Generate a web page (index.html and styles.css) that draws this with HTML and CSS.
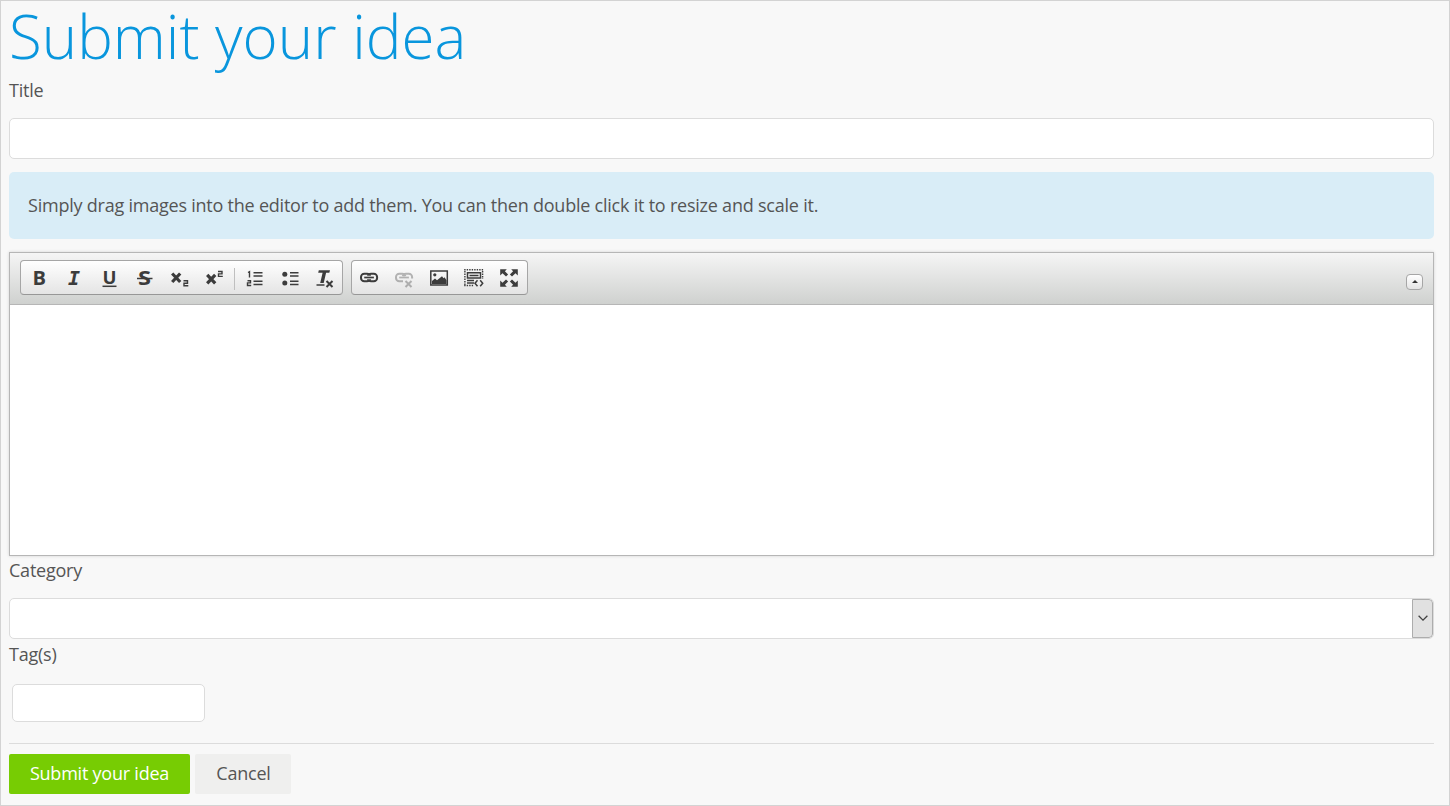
FILE: index.html
```html
<!DOCTYPE html>
<html lang="en">
<head>
<meta charset="utf-8">
<title>Submit your idea</title>
<link rel="stylesheet" href="styles.css">
</head>
<body>
<main class="page">
  <h1 class="heading">Submit your idea</h1>
  <form class="form">
    <label class="label" for="title">Title</label>
    <input class="field" id="title" type="text">
    <div class="notice">Simply drag images into the editor to add them. You can then double click it to resize and scale it.</div>

    <section class="editor">
      <div class="toolbar">
        <div class="group">
          <span class="tool"><svg class="icon" viewBox="0 0 21 21"><text class="glyph" x="4.500" y="18" textLength="13.5" lengthAdjust="spacingAndGlyphs">B</text></svg></span>
          <span class="tool"><svg class="icon" viewBox="0 0 21 21"><text class="glyph mono" x="5" y="18">I</text></svg></span>
          <span class="tool"><svg class="icon" viewBox="0 0 21 21"><text class="glyph underlined" x="4.500" y="16.500" textLength="14" lengthAdjust="spacingAndGlyphs">U</text><path class="line" d="M4.500 19.300h14"/></svg></span>
          <span class="tool"><svg class="icon" viewBox="0 0 21 21"><text class="glyph" x="5" y="18" textLength="13" lengthAdjust="spacingAndGlyphs">S</text><path class="line" d="M4 11.500h15.500"/></svg></span>
          <span class="tool"><svg class="icon" viewBox="0 0 21 21"><path class="cross" d="M4.200 6.500l8 8.500M12.200 6.500l-8 8.500"/><path class="digit" d="M15.500 13.800h4v2.400h-3.500v2.500h4.300"/></svg></span>
          <span class="tool"><svg class="icon" viewBox="0 0 21 21"><path class="cross" d="M4.200 7.800l8 8.500M12.200 7.800l-8 8.500"/><path class="digit" d="M15 4.500h4v2.400h-3.500v2.500h4.300"/></svg></span>
          <span class="separator"></span>
          <span class="tool"><svg class="icon" viewBox="0 0 21 21"><path class="digit" d="M4 5.500l1.500-.8v5.800M3.500 13.700h3v2.200h-3v2.600h3.700"/><path class="line" d="M9.500 5.800h9M9.500 9h9M9.500 14.200h9M9.500 17.500h9"/></svg></span>
          <span class="tool"><svg class="icon" viewBox="0 0 21 21"><circle class="solid" cx="5.800" cy="7.300" r="2.500"/><circle class="solid" cx="5.800" cy="16" r="2.500"/><path class="line" d="M11 5.800h8.500M11 9h8.500M11 14.200h8.500M11 17.500h8.500"/></svg></span>
          <span class="tool"><svg class="icon" viewBox="0 0 21 21"><path class="solid" d="M4.800 3.200h11.200l-.7 2.600h-3.200l-2.400 10.200h-3.500l2.400-10.200h-4.400z"/><path class="line" d="M2.500 18h8"/><path class="cross small" d="M12.500 14l6 6M18.500 14l-6 6"/></svg></span>
        </div>
        <div class="group">
          <span class="tool"><svg class="icon" viewBox="0 0 21 21"><g class="chain"><rect x="2" y="6.700" width="9.300" height="7.600" rx="3.300"/><rect x="8.800" y="6.700" width="9.300" height="7.600" rx="3.300"/><path class="chain-gap" d="M5.200 10.500h9.700"/><path class="chain-bar" d="M5.200 10.500h9.700"/></g></svg></span>
          <span class="tool"><svg class="icon faded" viewBox="0 0 21 21"><g class="chain"><path d="M9 14.300h-3.700a3.300 3.300 0 0 1-3.300-3.300v-1a3.300 3.300 0 0 1 3.300-3.300h2.700a3.300 3.300 0 0 1 3.300 2.500M8.800 9.300a3.300 3.300 0 0 1 3.300-2.600h2.700a3.300 3.300 0 0 1 3.300 3.300v1.500"/><path class="chain-bar" d="M5.200 10.500h9.700"/></g><path class="cross small" d="M11.500 14l6 6M17.500 14l-6 6"/></svg></span>
          <span class="tool"><svg class="icon" viewBox="0 0 21 21"><rect class="line" x="1.800" y="4" width="16.500" height="14"/><circle class="solid" cx="5.800" cy="7.800" r="1.600"/><path class="solid" d="M3 17v-3l3-2.500 2 1.700 5-4 1.500 2 1-1 2 3v3.800z"/></svg></span>
          <span class="tool"><svg class="icon" viewBox="0 0 21 21"><path class="dots" d="M.2 2.700h19M.2 18.500h10M.9 4v14M18.600 4v8"/><path class="line" d="M3.500 5.700h13v5.300h-13zM3 13.500h7M3 16h7M5.500 8.400h9"/><path class="line" d="M13.500 13.200l-2.500 3 2.500 3M16.200 13.200l2.500 3-2.500 3"/></svg></span>
          <span class="tool"><svg class="icon" viewBox="0 0 21 21"><path class="solid" d="M1.200 2.300h6.600l-1.900 2 3.200 3.200-2.100 2.100-3.500-3.400-2.300 2.200zM18.800 2.300h-6.600l1.900 2-3.200 3.200 2.100 2.100 3.500-3.400 2.300 2.200zM1.200 19.700h6.600l-1.900-2 3.200-3.200-2.100-2.100-3.500 3.400-2.300-2.200zM18.800 19.700h-6.600l1.900-2-3.200-3.200 2.100-2.100 3.500 3.400 2.300-2.200z"/></svg></span>
        </div>
        <span class="collapse"><svg class="collapse-arrow" viewBox="0 0 6 3"><path d="M0 3l3-3 3 3z"/></svg></span>
      </div>
      <div class="canvas"></div>
    </section>

    <label class="label category-label">Category</label>
    <div class="field select"><span class="select-button"><svg class="chevron" viewBox="0 0 10 6"><path d="M.6.700l4.400 4.400 4.400-4.400"/></svg></span></div>
    <label class="label tag-label" for="tags">Tag(s)</label>
    <input class="field tags" id="tags" type="text">
    <div class="actions">
      <button class="button primary" type="button">Submit your idea</button>
      <button class="button" type="button">Cancel</button>
    </div>
  </form>
</main>
</body>
</html>
```
FILE: styles.css
```css
* { box-sizing: border-box; }

body {
  margin: 0;
  background: #f8f8f8;
  color: #555;
  font: 18px/26px "Open Sans", sans-serif;
  letter-spacing: -0.225px;
}

.page {
  height: 806px;
  padding: 0 15px 0 8px;
  border: 1px solid #d3d3d3;
}

.heading {
  height: 76px;
  margin: 0;
  color: #0996dd;
  font-size: 60px;
  font-weight: 300;
  line-height: 71px;
  letter-spacing: 0;
}

.form { display: flex; flex-direction: column; }

.label { height: 41px; }

.field {
  width: 100%;
  height: 41px;
  padding: 0 12px;
  border: 1px solid #dcdcdc;
  border-radius: 5px;
  background: #fff;
  font: inherit;
}

.notice {
  height: 67px;
  margin: 13px 0;
  padding: 0 19px;
  border-radius: 5px;
  background: #d9edf7;
  line-height: 67px;
}

.editor {
  height: 304px;
  border: 1px solid #b6b6b6;
  background: #fff;
  box-shadow: 0 0 3px rgba(0, 0, 0, .15);
}

.toolbar {
  display: flex;
  align-items: flex-start;
  gap: 8px;
  height: 52px;
  padding: 7px 10px;
  border-bottom: 1px solid #b6b6b6;
  background: linear-gradient(#f5f5f5, #cfd1cf);
}

.group {
  display: flex;
  height: 35px;
  border: 1px solid #a6a6a6;
  border-bottom-color: #979797;
  border-radius: 4px;
  background: linear-gradient(#fff, #e4e4e4);
}

.tool {
  display: flex;
  align-items: center;
  justify-content: center;
  width: 35px;
}

.icon {
  width: 21px;
  height: 21px;
  overflow: visible;
  fill: none;
  color: #3c3c3c;
}

.faded { opacity: .35; }
.glyph { fill: currentColor; font: bold 20px "Open Sans", sans-serif; letter-spacing: 0; }
.underlined { font-size: 18.500px; }
.mono { font: italic bold 20px "DejaVu Sans Mono", monospace; }
.solid { fill: currentColor; }
.line { stroke: currentColor; stroke-width: 1.5; }
.cross { stroke: currentColor; stroke-width: 3.200; }
.small { stroke-width: 2; }
.digit { stroke: currentColor; stroke-width: 1.400; }
.chain { stroke: currentColor; stroke-width: 2; }
.chain-gap { stroke: #f2f2f2; stroke-width: 3.600; }
.chain-bar { stroke-width: 1.700; }
.dots { stroke: currentColor; stroke-width: 1.400; stroke-dasharray: 1.400 1.100; }

.separator {
  width: 1px;
  height: 22px;
  margin: 7px 2px 0 3px;
  background: #bfbfbf;
}

.collapse {
  display: flex;
  align-items: center;
  justify-content: center;
  width: 17px;
  height: 16px;
  margin: 14px 0 0 auto;
  border: 1px solid #a6a6a6;
  border-radius: 4px;
  background: linear-gradient(#fff, #e4e4e4);
}

.collapse-arrow { width: 6px; height: 3px; margin-top: -2px; fill: #333; }

.category-label { height: 42px; padding-top: 1px; }

.select {
  display: flex;
  justify-content: flex-end;
  padding: 0;
  overflow: hidden;
}

.select-button {
  display: flex;
  align-items: center;
  justify-content: center;
  width: 21px;
  border: 1px solid #adadad;
  border-radius: 0 4px 4px 0;
  background: #e1e1e1;
}

.chevron { width: 10px; height: 6px; margin-bottom: 1px; fill: none; stroke: #444; stroke-width: 1.300; }

.tag-label { height: 45px; padding-top: 2px; }

.tags { width: 193px; height: 38px; margin-left: 3px; }

.actions {
  display: flex;
  gap: 5px;
  margin-top: 21px;
  padding-top: 10px;
  border-top: 1px solid #dcdcdc;
}

.button {
  width: 96px;
  height: 40px;
  padding: 0 0 2px 1px;
  border: 0;
  border-radius: 2px;
  background: #efefee;
  color: #555;
  font: inherit;
  letter-spacing: inherit;
}

.primary { width: 181px; padding-left: 0; background: #77cc03; color: #fff; }
```
